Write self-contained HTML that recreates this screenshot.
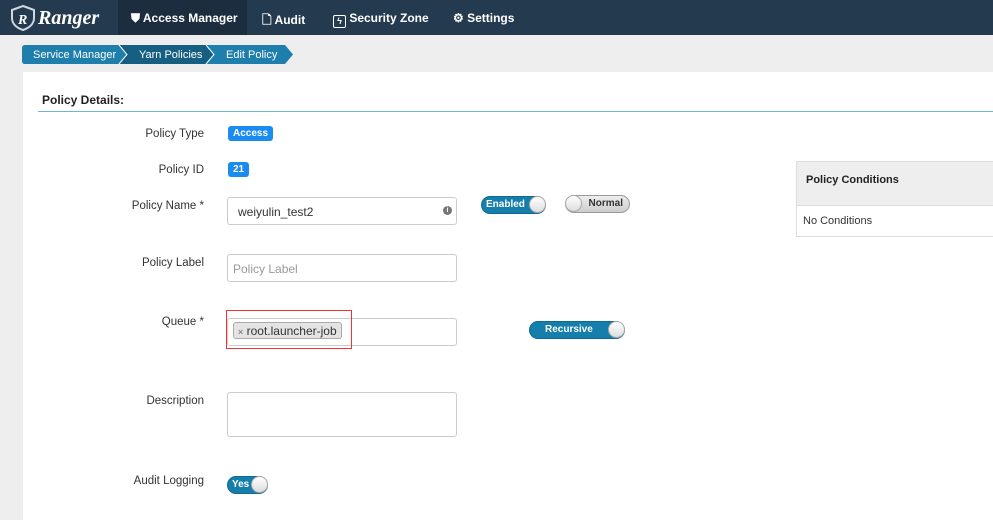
<!DOCTYPE html>
<html><head><style>
*{box-sizing:border-box;margin:0;padding:0}
body{width:993px;height:520px;overflow:hidden;background:#eeeeee;font-family:"Liberation Sans",Arial,sans-serif;font-size:12px;color:#333;position:relative}
.a{position:absolute}
.nav{left:0;top:0;width:993px;height:35px;background:#243a4f}
.nv{color:#fff;font-weight:bold;font-size:12px;top:11px}
.lbl{font-size:11.5px;color:#333;text-align:right;width:120px}
.inp{border:1px solid #ccc;border-radius:3px;background:#fff;height:28px}
.tog{border-radius:10px;height:18px;color:#fff;font-weight:bold;font-size:10px}
.knob{position:absolute;width:17px;height:17px;border-radius:50%;background:linear-gradient(#fff,#ddd);border:1px solid #aaa;top:0}
</style></head><body>
<div class="a nav"></div>
<div class="a" style="left:118px;top:0;width:129px;height:35px;background:#1b2d3e"></div>
<svg class="a" style="left:10px;top:5px" width="26" height="26" viewBox="0 0 26 26"><path d="M13 1 L24 5 V13 C24 19 19 23 13 25 C7 23 2 19 2 13 V5 Z" fill="none" stroke="#cfd8e0" stroke-width="2"/><text x="8" y="19" fill="#fff" font-family="Liberation Serif" font-weight="bold" font-style="italic" font-size="14">R</text></svg>
<div class="a" style="left:38px;top:7px;color:#fff;font-family:'Liberation Serif',serif;font-style:italic;font-weight:bold;font-size:20px">Ranger</div>
<div class="a nv" style="left:131px">&#x26CA; Access Manager</div>
<div class="a nv" style="left:262px">&#x1F5CB; Audit</div>
<div class="a nv" style="left:333px"><span style="display:inline-block;width:13px;height:13px;border:1.5px solid #fff;border-radius:2px;font-size:9px;text-align:center;line-height:10px;vertical-align:-2px">&#x03DF;</span> Security Zone</div>
<div class="a nv" style="left:453px">&#x2699; Settings</div>
<svg class="a" style="left:22px;top:45px" width="272" height="19"><path d="M3 0 H97 L105 9.5 L97 19 H3 Q0 19 0 16 V3 Q0 0 3 0Z" fill="#1e7eac"/><path d="M97 0 H184 L192 9.5 L184 19 H97 L105 9.5Z" fill="#175f82"/><path d="M184 0 H263 L271 9.5 L263 19 H184 L192 9.5Z" fill="#1e7eac"/><path d="M97 0 L105 9.5 L97 19 M184 0 L192 9.5 L184 19" stroke="#fff" fill="none"/>
<text x="11" y="13" fill="#fff" font-size="11" font-family="Liberation Sans">Service Manager</text><text x="117" y="13" fill="#fff" font-size="11" font-family="Liberation Sans">Yarn Policies</text><text x="204" y="13" fill="#fff" font-size="11" font-family="Liberation Sans">Edit Policy</text></svg>
<div class="a" style="left:23px;top:72px;width:970px;height:448px;background:#fff"></div>
<div class="a" style="left:42px;top:93px;font-weight:bold;font-size:12px;color:#222">Policy Details:</div>
<div class="a" style="left:38px;top:111px;width:955px;height:1px;background:#6bb5d6"></div>
<div class="a lbl" style="left:84px;top:128px">Policy Type</div>
<div class="a" style="left:228px;top:126px;background:#1a8cf0;color:#fff;font-weight:bold;font-size:10px;padding:2px 5px;border-radius:3px">Access</div>
<div class="a lbl" style="left:84px;top:164px">Policy ID</div>
<div class="a" style="left:228px;top:162px;background:#1a8cf0;color:#fff;font-weight:bold;font-size:10px;padding:2px 5px;border-radius:3px">21</div>
<div class="a lbl" style="left:84px;top:200px">Policy Name *</div>
<div class="a inp" style="left:227px;top:197px;width:230px;padding:7px 10px;font-size:12px">weiyulin_test2<span style="position:absolute;right:4px;top:8px;width:9px;height:9px;border-radius:50%;background:#777;color:#fff;font-size:7px;text-align:center;line-height:9px;font-weight:bold">i</span></div>
<div class="a tog" style="left:481px;top:196px;width:65px;background:#157eab;border:1px solid #0e6a92"><span style="position:absolute;left:4px;top:2px">Enabled</span><div class="knob" style="right:-1px;top:-1px"></div></div>
<div class="a tog" style="left:565px;top:195px;width:65px;background:linear-gradient(#eee,#ccc);border:1px solid #999;color:#333"><div class="knob" style="left:-1px;top:-1px"></div><span style="position:absolute;right:6px;top:2px">Normal</span></div>
<div class="a" style="left:796px;top:161px;width:197px;height:76px;border:1px solid #ddd;border-right:none"></div>
<div class="a" style="left:797px;top:162px;width:196px;height:44px;background:#eee;border-bottom:1px solid #ddd"></div>
<div class="a" style="left:806px;top:174px;font-weight:bold;font-size:11px;color:#222">Policy Conditions</div>
<div class="a" style="left:803px;top:215px;font-size:11px">No Conditions</div>
<div class="a lbl" style="left:84px;top:257px">Policy Label</div>
<div class="a inp" style="left:227px;top:254px;width:230px;padding:7px 5px;color:#999;font-size:12px">Policy Label</div>
<div class="a lbl" style="left:84px;top:316px">Queue *</div>
<div class="a inp" style="left:227px;top:318px;width:230px"></div>
<div class="a" style="left:233px;top:322px;height:17px;border:1px solid #aaa;border-radius:3px;background:#e4e4e4;padding:1px 4px;font-size:12px"><span style="color:#888;font-size:9px;font-weight:bold">×</span> root.launcher-job</div>
<div class="a" style="left:226px;top:310px;width:126px;height:39px;border:1px solid #e33"></div>
<div class="a tog" style="left:529px;top:321px;width:96px;background:#157eab;border:1px solid #0e6a92"><span style="position:absolute;left:15px;top:2px">Recursive</span><div class="knob" style="right:-1px;top:-1px"></div></div>
<div class="a lbl" style="left:84px;top:395px">Description</div>
<div class="a inp" style="left:227px;top:392px;width:230px;height:45px"></div>
<div class="a lbl" style="left:84px;top:475px">Audit Logging</div>
<div class="a tog" style="left:227px;top:476px;width:41px;background:#157eab;border:1px solid #0e6a92"><span style="position:absolute;left:4px;top:2px">Yes</span><div class="knob" style="right:-1px;top:-1px"></div></div>
</body></html>
